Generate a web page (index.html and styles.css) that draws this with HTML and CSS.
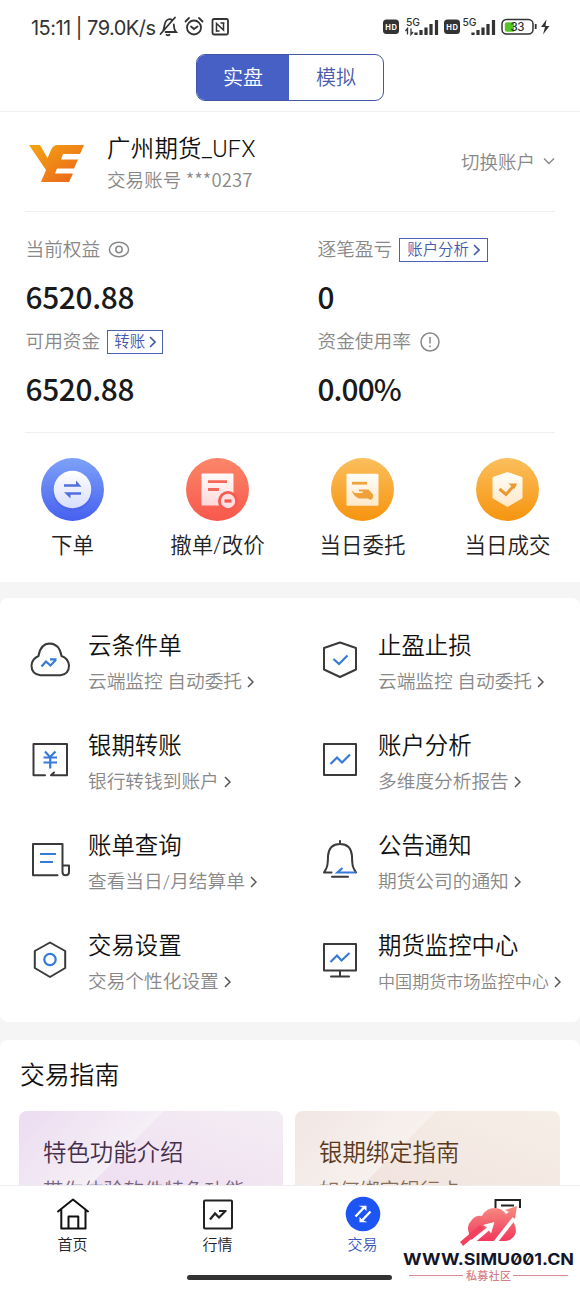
FILE: index.html
```html
<!DOCTYPE html>
<html lang="zh-CN">
<head>
<meta charset="utf-8">
<title>交易</title>
<link rel="stylesheet" href="styles.css">
</head>
<body>
<svg class="defs" width="0" height="0">
  <defs>
    <linearGradient id="blue" x1="0" y1="0" x2="0" y2="1"><stop offset="0" stop-color="#7da2f8"/><stop offset="1" stop-color="#4660ef"/></linearGradient>
    <linearGradient id="red" x1="0" y1="0" x2="0" y2="1"><stop offset="0" stop-color="#fb8668"/><stop offset="1" stop-color="#f8584d"/></linearGradient>
    <linearGradient id="amber" x1="0" y1="0" x2="0" y2="1"><stop offset="0" stop-color="#fbbf5c"/><stop offset="1" stop-color="#f6940f"/></linearGradient>
    <linearGradient id="paleBlue" x1="0" y1="0" x2="0" y2="1"><stop offset="0" stop-color="#fff"/><stop offset="1" stop-color="#d7defb"/></linearGradient>
    <linearGradient id="paleRed" x1="0" y1="0" x2="0" y2="1"><stop offset="0" stop-color="#fffafa"/><stop offset="1" stop-color="#ffd9d9"/></linearGradient>
    <linearGradient id="paleAmber" x1="0" y1="0" x2="0" y2="1"><stop offset="0" stop-color="#fffdf8"/><stop offset="1" stop-color="#fee9c8"/></linearGradient>
    <linearGradient id="brand" x1="0" y1="0" x2="1" y2="1"><stop offset="0" stop-color="#f4a512"/><stop offset="1" stop-color="#ea621c"/></linearGradient>
    <linearGradient id="coral" gradientUnits="userSpaceOnUse" x1="0" y1="8" x2="0" y2="46"><stop offset="0" stop-color="#f58a80"/><stop offset="1" stop-color="#f22e58"/></linearGradient>
  </defs>
</svg>

<div class="screen">
  <header class="top">
    <div class="status">
      <span class="clock">15:11 | 79.0K/s</span>
      <svg class="status-left" width="72" height="22" viewBox="0 0 72 22" fill="none" stroke="#333" stroke-width="1.8" stroke-linecap="round">
        <path d="M4 15C6 12 4.500 5 9 3.500Q11 2.500 13 3.800M14.800 8.500Q15 14 17 16H6.500M1.500 18 16 1.500M7.500 18.800Q9 19.800 10.500 18.800"/>
        <circle cx="35" cy="11.500" r="7"/><path d="M32 10.500l3 2.500 3.500-2.500M26.500 5.500 30 2M43.500 5.500 40 2"/>
        <rect x="53.500" y="3" width="15.500" height="15.500" rx="1.500"/><path d="M57.500 15V7.500L64.500 14V7.500" stroke-width="1.500"/><path d="M57.500 15H60M62 7H64.800" stroke-width="1.500"/>
      </svg>
      <svg class="status-right" width="168" height="22" viewBox="0 0 168 22">
        <g fill="#333"><rect x="0" y="3.500" width="16" height="14.500" rx="3.500"/><rect x="61" y="3.500" width="16" height="14.500" rx="3.500"/></g>
        <g class="hd"><text x="2.200" y="13.800" textLength="11.600">HD</text><text x="63.200" y="13.800" textLength="11.600">HD</text></g>
        <g class="net"><text x="23" y="10" textLength="14">5G</text><text x="79.500" y="10" textLength="14">5G</text></g>
        <path d="M24.500 18.500V12.500L22.500 15M28 12.500V18.500L30 16" stroke="#333" stroke-width="1.300" fill="none"/>
        <path d="M33 19V16.500M38 19V14M43 19V11.500M48 19V8M53.500 19V4M90 19V16.500M95 19V14M100 19V11.500M105 19V8M110.500 19V4" stroke="#333" stroke-width="3.200"/>
        <rect x="119" y="3.500" width="31" height="14.500" rx="4.500" fill="#fff" stroke="#333" stroke-width="1.500"/>
        <path d="M124 6.200H131V15.800H124Q121.800 15.800 121.800 13.500V8.500Q121.800 6.200 124 6.200Z" fill="#55c522"/>
        <rect x="151.800" y="8" width="1.800" height="5" fill="#333"/>
        <text class="charge" x="127.500" y="15" textLength="14">33</text>
        <path d="M163.500 3.500 158 11H162L160 18.500 166.500 10H162.500Z" fill="#333"/>
      </svg>
    </div>
    <div class="toggle"><span class="toggle-on">实盘</span><span class="toggle-off">模拟</span></div>
  </header>

  <main class="content">
    <section class="panel">
      <div class="account">
        <svg class="logo" width="56" height="38" viewBox="0 0 56 38" fill="url(#brand)">
          <path d="M0 0H11L18.500 13 22 5Q24 0 29 0H55L51 9H34L32 14.500H49L45 23.500H28L26 28.500H44L40 37H12L17 25Z"/>
        </svg>
        <div class="who"><div class="name">广州期货_UFX</div><div class="number">交易账号 ***0237</div></div>
        <div class="switch">切换账户<svg width="12" height="8" viewBox="0 0 12 8" fill="none" stroke="#888" stroke-width="1.400"><path d="M1 1.500 6 6.500 11 1.500"/></svg></div>
      </div>

      <div class="stats">
        <div class="label">当前权益<svg width="22" height="18" viewBox="0 0 22 18" fill="none" stroke="#888" stroke-width="1.500"><ellipse cx="11" cy="8.500" rx="9.600" ry="7.200"/><circle cx="11" cy="8.500" r="3.200"/></svg></div>
        <div class="label">逐笔盈亏<span class="tag wide">账户分析<svg width="7" height="12" viewBox="0 0 7 12"><path d="M1 1 6 6 1 11"/></svg></span></div>
        <div class="value">6520.88</div>
        <div class="value">0</div>
        <div class="label">可用资金<span class="tag">转账<svg width="7" height="12" viewBox="0 0 7 12"><path d="M1 1 6 6 1 11"/></svg></span></div>
        <div class="label">资金使用率<svg class="info" width="20" height="20" viewBox="0 0 20 20" fill="none" stroke="#888" stroke-width="1.500"><circle cx="10" cy="10" r="9"/><path d="M10 5V11.500M10 13.500V15.200"/></svg></div>
        <div class="value">6520.88</div>
        <div class="value percent">0.00%</div>
      </div>

      <div class="actions">
        <div class="action">
          <svg width="63" height="63" viewBox="0 0 63 63"><circle cx="31.500" cy="31.500" r="31.500" fill="url(#blue)"/><circle cx="31.500" cy="33.500" r="19.500" fill="#3650d8" opacity=".25"/><circle cx="31.500" cy="31.500" r="18.800" fill="url(#paleBlue)"/><path d="M23 26.200H35V22.500L40.500 28.800H23ZM40 36.800H29.500V40.500L23 34.200H40Z" fill="#5070df"/></svg>
          <span>下单</span>
        </div>
        <div class="action">
          <svg width="63" height="63" viewBox="0 0 63 63"><circle cx="31.500" cy="31.500" r="31.500" fill="url(#red)"/><rect x="15.500" y="15.500" width="32" height="32" rx="1" fill="url(#paleRed)"/><path d="M22 23.700H41M22 31.500H33" stroke="#f2685b" stroke-width="2.800"/><circle cx="42" cy="43" r="10" fill="#f65b50"/><circle cx="42" cy="43" r="7.200" fill="#ffdfe0"/><path d="M38.500 43H45.500" stroke="#f2574e" stroke-width="3.200"/></svg>
          <span>撤单/改价</span>
        </div>
        <div class="action">
          <svg width="63" height="63" viewBox="0 0 63 63"><circle cx="31.500" cy="31.500" r="31.500" fill="url(#amber)"/><rect x="15.500" y="15.800" width="32" height="32" rx="1" fill="url(#paleAmber)"/><path d="M21 25.200H36" stroke="#f0a33c" stroke-width="2.800"/><path d="M20.500 32.500 24 35H31L32.500 33.500H28V31.500H37.500L42 36.500V39.500L40 42 36.500 40.500H28Q23 38.500 20.500 32.500Z" fill="#efa038"/></svg>
          <span>当日委托</span>
        </div>
        <div class="action">
          <svg width="63" height="63" viewBox="0 0 63 63"><circle cx="31.500" cy="31.500" r="31.500" fill="url(#amber)"/><path d="M31.500 14.500 46 19.500V40L31.500 48.500 17 40V19.500Z" fill="url(#paleAmber)" stroke="url(#paleAmber)" stroke-linejoin="round"/><path d="M23.500 31 30 36.500 38 27.500" fill="none" stroke="#eb982f" stroke-width="3"/><path d="M32.500 25.500H41L38.500 31Z" fill="#eb982f"/></svg>
          <span>当日成交</span>
        </div>
      </div>
    </section>

    <section class="features">
      <div class="feature">
        <svg class="icon" viewBox="0 0 44 44"><path d="M12.500 35.200Q3.500 34.200 3.500 25.500 4.200 18.500 10.500 16 12.500 3.500 22 3.500 31.500 4 33.500 16 40 18 41 25.500 41 34.200 32.500 35.200Z"/><path class="accent" d="M13.500 26.500 18 21.500 22.500 25.500 28 19.800M22 19.300H28.500"/></svg>
        <div><h3>云条件单</h3><p>云端监控 自动委托<svg class="arrow" viewBox="0 0 7 12"><path d="M1 1 6 6 1 11"/></svg></p></div>
      </div>
      <div class="feature">
        <svg class="icon" viewBox="0 0 44 44"><path d="M22 2.500 38 8V29.500L22 37 6 29.500V8Z"/><path class="accent" d="M15.500 19 21 24 29.500 15.500"/></svg>
        <div><h3>止盈止损</h3><p>云端监控 自动委托<svg class="arrow" viewBox="0 0 7 12"><path d="M1 1 6 6 1 11"/></svg></p></div>
      </div>
      <div class="feature">
        <svg class="icon" viewBox="0 0 44 44"><path d="M17 35.200H5.500V4H39V35.200H23L26 32.500"/><path class="accent" d="M17 11.500 22 17 27.500 11.500M15.500 17.500H29M15.500 22.500H29M22.200 17V28.500"/></svg>
        <div><h3>银期转账</h3><p>银行转钱到账户<svg class="arrow" viewBox="0 0 7 12"><path d="M1 1 6 6 1 11"/></svg></p></div>
      </div>
      <div class="feature">
        <svg class="icon" viewBox="0 0 44 44"><rect x="6" y="4" width="32" height="31"/><path class="accent" d="M12.500 24 19 17.500 24 22.500 32 14.500"/></svg>
        <div><h3>账户分析</h3><p>多维度分析报告<svg class="arrow" viewBox="0 0 7 12"><path d="M1 1 6 6 1 11"/></svg></p></div>
      </div>
      <div class="feature">
        <svg class="icon" viewBox="0 0 44 44"><path d="M29.500 35.200H5V4H34.500V32Q34.500 35.200 37.500 35.200 41 35.200 41 32V25.500H34.500"/><path class="accent" d="M12 14H28M12 22H25"/></svg>
        <div><h3>账单查询</h3><p>查看当日/月结算单<svg class="arrow" viewBox="0 0 7 12"><path d="M1 1 6 6 1 11"/></svg></p></div>
      </div>
      <div class="feature">
        <svg class="icon" viewBox="0 0 44 44"><path d="M13.500 32.500H6L8 29Q10 26 10 16 11 4 22 4 33 4 34 16 34 26 36 29L38 32.500M22 4V1M14 36.800H30"/><path class="accent" d="M38 32.500H19.500L24.500 28"/></svg>
        <div><h3>公告通知</h3><p>期货公司的通知<svg class="arrow" viewBox="0 0 7 12"><path d="M1 1 6 6 1 11"/></svg></p></div>
      </div>
      <div class="feature">
        <svg class="icon" viewBox="0 0 44 44"><path d="M22 2.500 37.200 11V28L22 37 6.800 28V11Z"/><circle class="accent" cx="22" cy="19.500" r="5.700"/></svg>
        <div><h3>交易设置</h3><p>交易个性化设置<svg class="arrow" viewBox="0 0 7 12"><path d="M1 1 6 6 1 11"/></svg></p></div>
      </div>
      <div class="feature">
        <svg class="icon" viewBox="0 0 44 44"><path d="M6 4H38V30.500H6ZM22 30.500V36.500M13 36.500H31"/><path class="accent" d="M12.500 22 19 15.500 23.500 20.500 31.500 13"/></svg>
        <div><h3>期货监控中心</h3><p class="tight">中国期货市场监控中心<svg class="arrow" viewBox="0 0 7 12"><path d="M1 1 6 6 1 11"/></svg></p></div>
      </div>
    </section>

    <section class="guides">
      <h2>交易指南</h2>
      <div class="guide-row">
        <article class="guide violet"><h4>特色功能介绍</h4><p>带你体验软件特色功能</p></article>
        <article class="guide sand"><h4>银期绑定指南</h4><p>如何绑定银行卡</p></article>
      </div>
    </section>
  </main>

  <nav class="tabs">
    <div class="tab"><svg width="36" height="36" viewBox="0 0 36 36" fill="none" stroke="#111" stroke-width="2" stroke-linejoin="round" stroke-linecap="round"><path d="M3 15.500 18 3.500 33 15.500M6.300 14V32.500H30.500V14M13.500 32V20.500H23.300V32"/></svg><span>首页</span></div>
    <div class="tab"><svg width="36" height="36" viewBox="0 0 36 36" fill="none" stroke="#222" stroke-width="2"><rect x="4" y="4.500" width="28" height="28" rx="1"/><path d="M10 23.500 15 17.500 19 21.500 25 15.500M19 15H26.500" stroke-width="2.200"/></svg><span>行情</span></div>
    <div class="tab active"><svg width="36" height="36" viewBox="0 0 36 36"><circle cx="18" cy="18" r="17.300" fill="#1d55f4"/><path d="M10.500 20.500 19.500 11M25.500 15.500 16.500 25" fill="none" stroke="#fff" stroke-width="2.400"/><path d="M13.500 9.800H21.500V15L18.500 12ZM22.500 26.200H14.500V21L17.500 24Z" fill="#fff"/></svg><span>交易</span></div>
    <div class="tab"><svg width="36" height="36" viewBox="0 0 36 36" fill="none" stroke="#222" stroke-width="2"><path d="M5.500 12V4H30V12M11 9.500H24"/></svg></div>
    <div class="home-bar"></div>
    <svg class="brandmark" width="176" height="86" viewBox="0 0 176 86">
      <path d="M73 42Q66 41 67 34 64 27 69 22 73 16 80 17 84 9 93 9 100 9 104 15L107 13 103 11 115 7 113 20 110 18Q111 22 112 24 117 35 109 40 106 42.500 101 42Z" fill="url(#coral)"/>
      <path d="M91 43 110 19 114 20 96 43Z" fill="#fff"/>
      <path d="M58 43 78 26 82 29 61 47Q60 45 58 43Z" fill="#f2405f"/>
      <path d="M61 47.500 85 28.500 81 26 92.500 23 89 34.500 87 31.500 70 46Z" fill="#fff"/>
      <text class="brand-url" x="1" y="66" textLength="171" lengthAdjust="spacingAndGlyphs">WWW.SIMU001.CN</text>
      <path d="M7 76.500H61M111 76.500H166" stroke="#d98a90" stroke-width="1.200"/>
      <text class="brand-name" x="64" y="80.500" textLength="45">私募社区</text>
    </svg>
  </nav>
</div>
</body>
</html>
```
FILE: styles.css
```css
* { box-sizing: border-box; }
body { margin: 0; background: #fff; font-family: Roboto, "Noto Sans CJK SC", sans-serif; font-weight: 350; color: #1a1a1a; }
h2, h3, h4, p { margin: 0; font-weight: inherit; }
svg { display: block; flex: none; }
.defs { position: absolute; }
.screen { width: 580px; height: 1289px; display: flex; flex-direction: column; overflow: hidden; }

.top { height: 112px; flex: none; border-bottom: 1px solid #f0f0f0; }
.status { height: 54px; display: flex; align-items: center; padding: 0 29px 0 31px; color: #333; }
.clock { font: 400 20px/24px Inter, sans-serif; letter-spacing: -.52px; width: 126px; padding-top: 1px; white-space: pre; }
.status-left { margin-left: 2px; }
.status-right { margin-left: auto; }
.hd { fill: #fff; font: 700 7.5px Inter, sans-serif; }
.net { fill: #333; font: 500 10.3px Inter, sans-serif; }
.charge { fill: #333; font: 500 11.5px Inter, sans-serif; }
.toggle { width: 188px; height: 47px; margin: 0 auto; display: flex; border: 1.5px solid #4356a8; border-radius: 9px; overflow: hidden; font-size: 20px; line-height: 47px; text-align: center; }
.toggle-on { width: 92px; background: #4660c5; color: #fff; }
.toggle-off { flex: 1; color: #4a5cab; }

.content { flex: 1; min-height: 0; overflow: hidden; background: #f5f5f6; }
.panel { background: #fff; height: 470px; }
.account { height: 100px; margin: 0 25px; padding-left: 4px; display: flex; align-items: center; border-bottom: 1px solid #f0f0f0; }
.logo { margin-top: 4px; }
.who { margin-left: 22px; padding-top: 1px; }
.name { font-size: 23.4px; line-height: 34px; color: #111; letter-spacing: .3px; }
.number { font: 350 18.5px/26px "Noto Sans CJK SC", sans-serif; letter-spacing: .1px; color: #888; }
.switch { margin-left: auto; margin-top: -1px; display: flex; align-items: center; gap: 8px; font-size: 18.5px; color: #888; }

.stats { height: 221px; margin: 0 25px; padding: 22px 0 0 .5px; border-bottom: 1px solid #f0f0f0; display: grid; grid-template-columns: 292px 1fr; grid-template-rows: 32px 64px 24px 72px; align-items: center; }
.label { display: flex; align-items: center; font-size: 18.7px; line-height: 26px; color: #888; }
.label > svg { margin-left: 8px; }
.label .info { margin-left: 9px; }
.tag { display: flex; align-items: center; justify-content: center; gap: 4px; height: 24px; margin-left: 7px; padding: 0 6px; border: 1.5px solid #4c60b4; font-size: 15.4px; color: #4459ab; }
.wide { padding: 0 7px; }
.tag svg { width: 7px; height: 12px; fill: none; stroke: #4459ab; stroke-width: 1.6; }
.value { padding-bottom: 4px; font: 500 29.8px/36px "Noto Sans CJK SC", sans-serif; letter-spacing: -.3px; color: #1a1a1a; }
.percent { letter-spacing: -.9px; }

.actions { display: grid; grid-template-columns: repeat(4, 145px); padding-top: 25px; }
.action { display: flex; flex-direction: column; align-items: center; font-size: 21.5px; line-height: 32px; color: #222; gap: 9px; }

.features { height: 424px; margin-top: 16px; padding-top: 12px; background: #fff; border-radius: 8px; display: grid; grid-template-columns: 290px 290px; grid-auto-rows: 100px; align-content: start; }
.feature { display: flex; padding-left: 28px; gap: 16px; white-space: nowrap; }
.icon { width: 44px; height: 44px; margin-top: 30px; fill: none; stroke: #3a3a3a; stroke-width: 2; stroke-linejoin: round; stroke-linecap: round; }
.icon .accent { stroke: #377bd8; stroke-width: 2.2; stroke-linecap: butt; stroke-linejoin: miter; }
h3 { padding-top: 18px; font-size: 23.4px; line-height: 36px; color: #111; }
.feature p { display: flex; align-items: center; font-size: 18.7px; line-height: 36px; color: #888; }
.feature .tight { font-size: 17.1px; }
.arrow { width: 7px; height: 12px; margin: -1px 0 0 5px; fill: none; stroke: #555; stroke-width: 1.5; }

.guides { height: 240px; margin-top: 18px; padding: 0 20px 0 19px; background: #fff; border-radius: 8px; }
h2 { padding: 1px 0 0 1px; font-size: 24.8px; line-height: 70px; color: #111; }
.guide-row { display: grid; grid-template-columns: 264px 265px; gap: 12px; }
.guide { height: 140px; padding: 24px 24px 0; border-radius: 8px; white-space: nowrap; }
.violet { background: linear-gradient(135deg, #ecdcf1 0, #f5eff6 35.8%, transparent 36%), linear-gradient(20deg, #e9d8f0, #f1e3f2 60%, #f3edf3); color: #44304e; }
.sand { background: linear-gradient(135deg, #f1e6e2 0, #f7f1ee 34.8%, transparent 35%), linear-gradient(20deg, #efdfdc, #f3e7e2 60%, #f6efe6); color: #5b3a1c; }
h4 { font-size: 23.4px; line-height: 36px; }
.guide p { font-size: 20.2px; line-height: 41px; opacity: .7; }

.tabs { position: relative; height: 104px; flex: none; border-top: 1px solid #eee; background: #fff; display: grid; grid-template-columns: repeat(4, 145px); padding-top: 10px; }
.tab { display: flex; flex-direction: column; align-items: center; font-size: 15px; line-height: 24px; color: #222; gap: 1px; }
.active { color: #3a57bd; }
.home-bar { position: absolute; left: 187px; bottom: 9px; width: 205px; height: 5px; border-radius: 3px; background: #333; }
.brandmark { position: absolute; left: 402px; bottom: 4px; }
.brand-url { font: 700 16px Inter, sans-serif; font-feature-settings: "zero"; fill: #15152a; }
.brand-name { font: 500 11px "Noto Sans CJK SC", sans-serif; fill: #d58088; }
```
